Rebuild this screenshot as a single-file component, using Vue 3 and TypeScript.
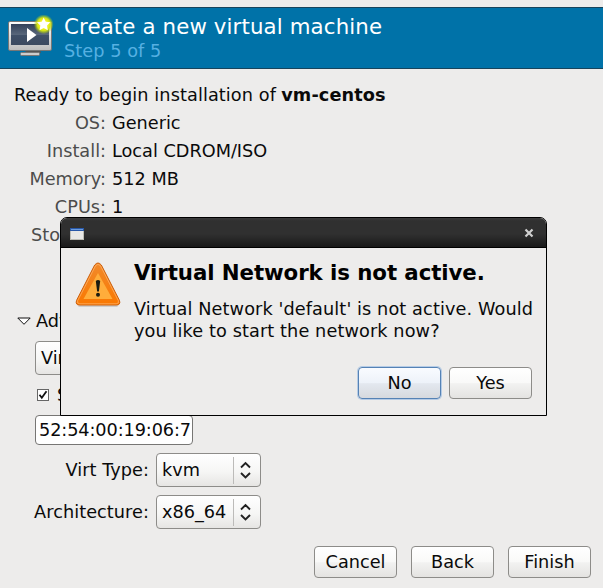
<script setup lang="ts">
interface SummaryRow {
  label: string
  value: string
}

const summary: SummaryRow[] = [
  { label: 'OS:', value: 'Generic' },
  { label: 'Install:', value: 'Local CDROM/ISO' },
  { label: 'Memory:', value: '512 MB' },
  { label: 'CPUs:', value: '1' },
  { label: 'Storage:', value: '' },
]

const selects: SummaryRow[] = [
  { label: 'Virt Type:', value: 'kvm' },
  { label: 'Architecture:', value: 'x86_64' },
]

const wizardActions: string[] = ['Cancel', 'Back', 'Finish']
</script>

<template>
  <main class="window">
    <header class="banner">
      <svg class="banner-icon" width="48" height="44" viewBox="0 0 48 44">
        <defs>
          <linearGradient id="screen" x1="0" y1="0" x2="0" y2="1">
            <stop offset="0" stop-color="#33415a" />
            <stop offset=".5" stop-color="#58667a" />
            <stop offset=".52" stop-color="#405068" />
            <stop offset="1" stop-color="#3c4a60" />
          </linearGradient>
          <linearGradient id="frame" x1="0" y1="0" x2="0" y2="1">
            <stop offset="0" stop-color="#fff" />
            <stop offset="1" stop-color="#bdbdbd" />
          </linearGradient>
          <radialGradient id="glow">
            <stop offset="0" stop-color="#fff" />
            <stop offset=".4" stop-color="#f4f428" />
            <stop offset=".65" stop-color="#d4e416" />
            <stop offset="1" stop-color="#a8cc10" stop-opacity="0" />
          </radialGradient>
        </defs>
        <path d="M18 35h14l1 3h-16z" fill="#555" />
        <rect x="12.500" y="37.500" width="19" height="3" rx="1" fill="#ccc" stroke="#777" />
        <rect x=".5" y="6.500" width="43" height="29" rx="1.500" fill="url(#frame)" stroke="#777" />
        <rect x="3" y="9" width="38" height="21" fill="url(#screen)" />
        <path d="M19 13v14l9.500-7z" fill="#fff" />
        <circle cx="35.700" cy="9.300" r="10" fill="url(#glow)" />
        <path d="M35.700 2.500l2 4.300 4.700.5-3.400 3.300.8 4.700-4.100-2.300-4.200 2.300.9-4.700-3.500-3.300 4.800-.5z" fill="#fff" />
      </svg>
      <div>
        <h1 class="banner-title">Create a new virtual machine</h1>
        <p class="banner-step">Step 5 of 5</p>
      </div>
    </header>

    <section class="content">
      <p class="ready">Ready to begin installation of <b>vm-centos</b></p>
      <dl class="summary">
        <template v-for="row in summary" :key="row.label">
          <dt>{{ row.label }}</dt>
          <dd>{{ row.value }}</dd>
        </template>
      </dl>

      <div class="expander">
        <svg width="14" height="9" viewBox="0 0 14 9">
          <path d="M.8 1h12.400L7 7.300z" fill="#fff" stroke="#111" />
        </svg>
        <span>Adv</span>
      </div>

      <div class="advanced">
        <div class="combo network">Virt</div>
        <div class="check">
          <svg width="12" height="12" viewBox="0 0 12 12">
            <rect x=".5" y=".5" width="11" height="11" fill="#fff" stroke="#666" />
            <path d="M2.500 5.800l2.300 3 4.700-6.500" fill="none" stroke="#111" stroke-width="1.800" />
          </svg>
          <span>Set</span>
        </div>
        <div class="entry">52:54:00:19:06:7</div>
      </div>

      <div class="selects">
        <template v-for="item in selects" :key="item.label">
          <span class="select-label">{{ item.label }}</span>
          <div class="combo">
            <span class="combo-value">{{ item.value }}</span>
            <span class="combo-arrows">
              <svg width="12" height="18" viewBox="0 0 12 18">
                <path d="M1 6.500L5.500 2 10 6.500M1 12L5.500 16.500 10 12" fill="none" stroke="#222" stroke-width="1.900" />
              </svg>
            </span>
          </div>
        </template>
      </div>
    </section>

    <footer class="actions">
      <button v-for="name in wizardActions" :key="name" class="button">{{ name }}</button>
    </footer>

    <section class="dialog">
      <div class="titlebar">
        <svg width="14" height="12" viewBox="0 0 14 12">
          <rect x=".5" y=".5" width="13" height="11" fill="#e8e8e6" stroke="#bcbcb4" />
          <rect width="14" height="3" fill="#2858a8" />
          <rect x="1" y="1" width="12" height="1" fill="#6b9bdd" />
        </svg>
        <svg width="10" height="12" viewBox="0 0 10 12">
          <path d="M1.500 1.500l7 7M8.500 1.500l-7 7" stroke="#d0d0d0" stroke-width="2.200" />
        </svg>
      </div>
      <div class="dialog-body">
        <svg class="warning" width="46" height="46" viewBox="0 0 46 46">
          <defs>
            <linearGradient id="rim" x1="0" y1="0" x2="0" y2="1">
              <stop offset="0" stop-color="#f18a2c" />
              <stop offset="1" stop-color="#fa7800" />
            </linearGradient>
          </defs>
          <path d="M4 45h38" stroke="#aaa" stroke-width="1.500" stroke-linecap="round" opacity=".6" />
          <path d="M19.700 4q3.300-4 6.600 0L44.500 39.500q1.300 4.500-3 4.500H4.500q-4.300 0-3-4.500z" fill="url(#rim)" stroke="#cc5e0a" />
          <path d="M20.500 4.800q2.500-3 5 0L43.400 39.800q.8 3-2.200 3H4.800q-3 0-2.200-3z" fill="none" stroke="#ffb066" stroke-width=".8" />
          <path d="M23 12L37.500 38h-29z" fill="#ffad3b" />
          <path d="M20.800 20q2.200-2 4.400 0L23.900 30.500h-1.800z" fill="#1c1c10" />
          <circle cx="23" cy="33.700" r="2" fill="#1c1c10" />
        </svg>
        <div class="message">
          <h2>Virtual Network is not active.</h2>
          <p>Virtual Network 'default' is not active. Would<br>you like to start the network now?</p>
        </div>
      </div>
      <div class="dialog-actions">
        <button class="button focused">No</button>
        <button class="button">Yes</button>
      </div>
    </section>
  </main>
</template>

<style>
body {
  background: #edeceb;
}
</style>

<style scoped>
* {
  box-sizing: border-box;
  margin: 0;
}

.window {
  position: relative;
  display: flex;
  flex-direction: column;
  width: 603px;
  height: 588px;
  padding-top: 7px;
  overflow: hidden;
  background: #edeceb;
  color: #0a0a0a;
  font: 17.7px/22px "DejaVu Sans", sans-serif;
  white-space: nowrap;
}

svg {
  display: block;
  flex: none;
}

.banner {
  display: flex;
  gap: 8px;
  height: 62px;
  padding: 7px 8px 0;
  background: #0072a8;
  border-top: 1px solid #17445c;
  border-bottom: 1px solid #17445c;
}

.banner-title {
  color: #fff;
  font-size: 21.3px;
  font-weight: 400;
  letter-spacing: .13px;
  line-height: 24px;
}

.banner-step {
  color: #56b0e2;
  letter-spacing: .06px;
  line-height: 24px;
}

.ready {
  margin-top: 12px;
  padding: 3px 14px 0;
  letter-spacing: .09px;
  line-height: 22px;
}

.ready b {
  margin-left: -.5px;
}

.summary {
  display: grid;
  grid-template-columns: 92px 1fr;
  column-gap: 6px;
  grid-auto-rows: 28px;
  margin-top: 3px;
  padding-left: 14px;
  line-height: 28px;
}

.summary dt {
  color: #4c4c4c;
  text-align: right;
}

.summary dt:last-of-type {
  text-align: left;
  padding-left: 17px;
}

.expander {
  display: flex;
  align-items: center;
  gap: 5px;
  margin-top: 61px;
  padding-left: 17px;
}

.advanced {
  display: flex;
  flex-direction: column;
  padding: 9px 0 0 35px;
}

.combo {
  display: flex;
  align-items: center;
  width: 105px;
  height: 34px;
  padding-left: 5px;
  border: 1px solid #8d8c89;
  border-radius: 4px;
  background: linear-gradient(#fff, #f6f6f5 55%, #e6e5e3);
}

.combo.network {
  width: 330px;
}

.combo-value {
  flex: 1;
}

.combo-arrows {
  display: flex;
  align-items: center;
  justify-content: center;
  width: 27px;
  height: 27px;
  padding-right: 3px;
  border-left: 1px solid #bcbbb9;
}

.check {
  display: flex;
  align-items: center;
  gap: 8px;
  margin-top: 9px;
  padding-left: 2px;
}

.entry {
  width: 158px;
  height: 30px;
  margin-top: 9px;
  padding-left: 3px;
  border: 1px solid #777674;
  border-radius: 4px;
  background: #fff;
  letter-spacing: -.1px;
  line-height: 28px;
}

.selects {
  display: grid;
  grid-template-columns: 115px 105px;
  grid-auto-rows: 34px;
  gap: 8px 7px;
  align-items: center;
  margin-top: 8px;
  padding-left: 34px;
}

.select-label {
  justify-self: end;
  letter-spacing: .05px;
}

.actions {
  display: flex;
  justify-content: flex-end;
  gap: 14px;
  margin-top: auto;
  padding: 0 12px 10px 0;
}

.button {
  width: 83px;
  height: 32px;
  padding: 0;
  border: 1px solid #8d8c89;
  border-radius: 4px;
  background: linear-gradient(#fff, #f9f9f8 50%, #f2f2f1 52%, #e4e3e1);
  color: inherit;
  font: inherit;
}

.button.focused {
  border-color: #5582b5;
  background: linear-gradient(#f9fbff, #edf2f9 50%, #e3e8ef 52%, #d6d9de);
  box-shadow: 0 0 0 1px #b5cbe5;
}

.dialog {
  position: absolute;
  top: 217px;
  left: 60px;
  width: 487px;
  height: 199px;
  border: 1px solid #000;
  border-radius: 7px 7px 0 0;
  background: #edeceb;
}

.titlebar {
  display: flex;
  align-items: center;
  justify-content: space-between;
  height: 30px;
  padding: 2px 12px 0 9px;
  border-bottom: 1px solid #000;
  border-radius: 6px 6px 0 0;
  background: linear-gradient(#3c3c3c, #303030 10%, #303030 55%, #191919);
}

.dialog-body {
  display: flex;
  gap: 13px;
  padding: 13px 0 0 14px;
}

.message h2 {
  color: #000;
  font-size: 21.3px;
  letter-spacing: -.07px;
  line-height: 24px;
}

.message p {
  margin-top: 13px;
  letter-spacing: .1px;
}

.dialog-actions {
  display: flex;
  justify-content: flex-end;
  gap: 8px;
  margin-top: 25px;
  padding-right: 14px;
}
</style>
